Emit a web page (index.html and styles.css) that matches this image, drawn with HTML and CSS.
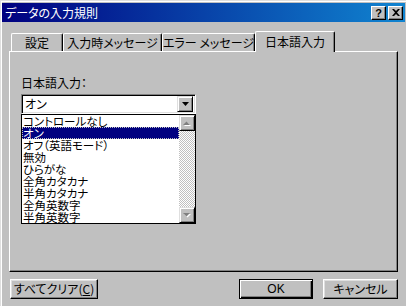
FILE: index.html
```html
<!DOCTYPE html>
<html lang="ja">
<head>
<meta charset="utf-8">
<title>データの入力規則</title>
<link rel="stylesheet" href="styles.css">
</head>
<body>
<div class="window">
  <div class="titlebar">
    <span class="title">データの入力規則</span>
    <div class="ctrls">
      <span class="tbtn help">?</span>
      <span class="tbtn close"><svg width="8" height="7" viewBox="0 0 8 7"><path d="M0 0h2l2 2 2-2h2L5 3.5 8 7H6L4 5 2 7H0l3-3.5z" fill="#000"/></svg></span>
    </div>
  </div>
  <div class="content">
    <div class="tabs">
      <div class="tab t1">設定</div>
      <div class="tab t2">入力時メッセージ</div>
      <div class="tab t3">エラー メッセージ</div>
      <div class="tab t4 active">日本語入力</div>
    </div>
    <div class="panel">
      <div class="label">日本語入力：</div>
      <div class="combo">
        <span class="combo-text">オン</span>
        <span class="drop-btn"><svg width="7" height="4" viewBox="0 0 7 4"><path d="M0 0h7L3.5 4z" fill="#000"/></svg></span>
      </div>
      <div class="list">
        <ul class="items">
          <li>コントロールなし</li>
          <li class="sel">オン</li>
          <li>オフ（英語モード）</li>
          <li>無効</li>
          <li>ひらがな</li>
          <li>全角カタカナ</li>
          <li>半角カタカナ</li>
          <li>全角英数字</li>
          <li>半角英数字</li>
        </ul>
        <div class="scrollbar">
          <span class="sbtn"><svg width="8" height="5" viewBox="0 0 8 5"><path d="M1 5h7L4.5 1.5z" fill="#fff"/><path d="M0 4h7L3.5 0.5z" fill="#808080"/></svg></span>
          <span class="track"></span>
          <span class="sbtn"><svg width="8" height="5" viewBox="0 0 8 5"><path d="M1 1h7L4.5 4.5z" fill="#fff"/><path d="M0 0h7L3.5 3.5z" fill="#808080"/></svg></span>
        </div>
      </div>
    </div>
    <div class="buttons">
      <span class="btn clear">すべてクリア(<u>C</u>)</span>
      <span class="spacer"></span>
      <span class="btn ok">OK</span>
      <span class="btn cancel">キャンセル</span>
    </div>
  </div>
</div>
</body>
</html>
```

FILE: styles.css
```css
* { box-sizing: border-box; }
html, body { margin: 0; padding: 0; background: #c0c0c0; }
body {
  font-family: "Noto Sans CJK JP", "Noto Sans", sans-serif;
  font-size: 12px;
  font-feature-settings: "palt";
  color: #000;
}
.window {
  width: 406px;
  height: 306px;
  background: #c0c0c0;
  padding: 2px;
  border-left: 1px solid #dfdfdf;
  border-top: 1px solid #dfdfdf;
  box-shadow: inset 1px 1px #fff;
  overflow: hidden;
}
.titlebar {
  height: 19px;
  margin-left: -1px;
  margin-right: -1px;
  background: linear-gradient(to right, #000080, #1084d0);
  display: flex;
  align-items: center;
  justify-content: space-between;
  padding: 0 2px 0 3px;
}
.title {
  color: #fff;
  font-size: 12px;
  line-height: 19px;
}
.ctrls { display: flex; gap: 2px; }
.tbtn {
  width: 15px;
  height: 14px;
  background: #c0c0c0;
  border-top: 1px solid #fff;
  border-left: 1px solid #fff;
  border-right: 1px solid #000;
  border-bottom: 1px solid #000;
  box-shadow: inset -1px -1px #808080;
  display: flex;
  align-items: center;
  justify-content: center;
  font-family: "Liberation Sans", sans-serif;
  font-weight: bold;
  font-size: 11px;
  line-height: 12px;
}
.content { padding: 9px 6px 0 6px; }
.tabs {
  display: flex;
  align-items: flex-end;
  height: 20px;
  padding-left: 2px;
  position: relative;
  z-index: 1;
}
.tab {
  height: 18px;
  border-top: 1px solid #fff;
  border-left: 1px solid #fff;
  border-right: 1px solid #000;
  border-radius: 2px 2px 0 0;
  box-shadow: inset -1px 0 #808080;
  background: #c0c0c0;
  display: flex;
  align-items: center;
  justify-content: center;
  line-height: 14px;
  padding-top: 1px;
  white-space: nowrap;
}
.t1 { width: 52px; }
.t2 { width: 99px; }
.t3 { width: 93px; }
.t4 { width: 80px; }
.tab.active {
  height: 21px;
  margin-bottom: -1px;
  padding-bottom: 2px;
}
.panel {
  height: 221px;
  border-top: 1px solid #fff;
  border-left: 1px solid #fff;
  border-right: 1px solid #000;
  border-bottom: 1px solid #000;
  box-shadow: inset -1px -1px #808080;
  padding: 25px 0 0 11px;
}
.label { line-height: 12px; height: 12px; }
.combo {
  margin-top: 5px;
  width: 175px;
  height: 20px;
  background: #fff;
  border-top: 1px solid #808080;
  border-left: 1px solid #808080;
  border-right: 1px solid #fff;
  border-bottom: 1px solid #fff;
  box-shadow: inset 1px 1px #000, inset -1px -1px #dfdfdf;
  display: flex;
  align-items: center;
  justify-content: space-between;
  padding: 2px 2px 2px 3px;
}
.combo-text { line-height: 12px; }
.drop-btn {
  width: 16px;
  height: 16px;
  background: #c0c0c0;
  border-top: 1px solid #dfdfdf;
  border-left: 1px solid #dfdfdf;
  border-right: 1px solid #000;
  border-bottom: 1px solid #000;
  box-shadow: inset 1px 1px #fff, inset -1px -1px #808080;
  display: flex;
  align-items: center;
  justify-content: center;
}
.list {
  width: 175px;
  height: 110px;
  border: 1px solid #000;
  background: #fff;
  display: flex;
}
.items {
  list-style: none;
  margin: 0;
  padding: 0;
  flex: 1;
}
.items li {
  height: 12px;
  font-size: 11.5px;
  line-height: 12px;
  padding-left: 1px;
  white-space: nowrap;
}
.items li.sel {
  background: #000080;
  color: #fff;
  outline: 1px dotted #c0c0c0;
  outline-offset: -1px;
}
.scrollbar {
  width: 16px;
  display: flex;
  flex-direction: column;
}
.sbtn {
  height: 16px;
  background: #c0c0c0;
  border-top: 1px solid #dfdfdf;
  border-left: 1px solid #dfdfdf;
  border-right: 1px solid #000;
  border-bottom: 1px solid #000;
  box-shadow: inset 1px 1px #fff, inset -1px -1px #808080;
  display: flex;
  align-items: center;
  justify-content: center;
}
.track {
  flex: 1;
  background-image: conic-gradient(#fff 0 25%, #c0c0c0 0 50%, #fff 0 75%, #c0c0c0 0);
  background-size: 2px 2px;
}
.buttons {
  display: flex;
  margin-top: 7px;
  padding-left: 1px;
  gap: 10px;
}
.spacer { flex: 1; }
.btn {
  height: 20px;
  background: #c0c0c0;
  border-top: 1px solid #fff;
  border-left: 1px solid #fff;
  border-right: 1px solid #000;
  border-bottom: 1px solid #000;
  box-shadow: inset -1px -1px #808080, inset 1px 1px #dfdfdf;
  display: flex;
  align-items: center;
  justify-content: center;
  line-height: 12px;
}
.btn u { text-decoration-thickness: 1px; text-underline-offset: 1px; }
.clear { width: 88px; }
.ok {
  width: 74px;
  border: 1px solid #000;
  box-shadow: inset 1px 1px #fff, inset -1px -1px #000, inset -2px -2px #808080;
  font-family: "Liberation Sans", sans-serif;
}
.cancel { width: 75px; }
```
